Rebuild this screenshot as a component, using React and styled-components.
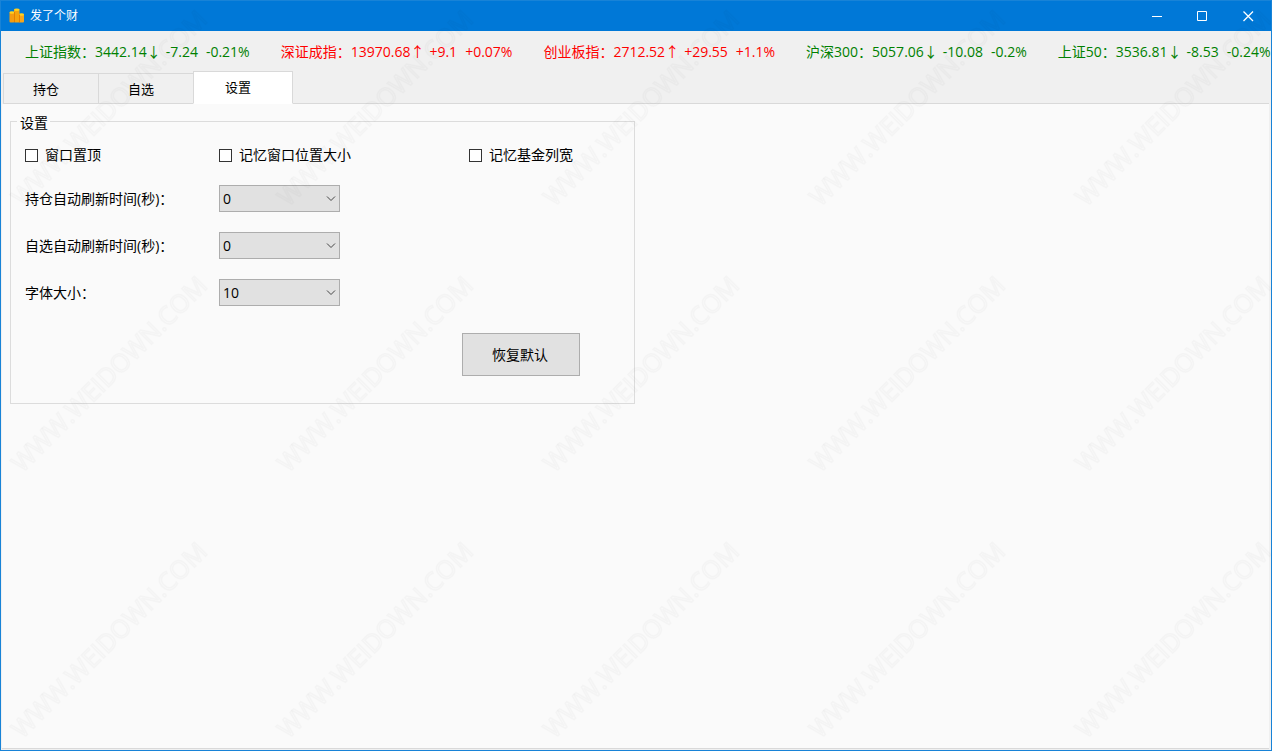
import React from "react";
import styled, { createGlobalStyle } from "styled-components";

const GlobalStyle = createGlobalStyle`
  * { box-sizing: border-box; }
  body {
    margin: 0;
    font-family: "Open Sans", "Noto Sans CJK SC", sans-serif;
    font-size: 14px;
    line-height: 20px;
    color: #000;
  }
  button, select, input { font: inherit; color: inherit; margin: 0; }
`;

const Window = styled.div`
  position: relative;
  display: flex;
  flex-direction: column;
  min-height: 100vh;
  overflow: hidden;
  border: 1px solid #1883d7;
  background: #f0f0f0;
`;

const TitleBar = styled.header`
  display: flex;
  align-items: center;
  height: 30px;
  padding-left: 8px;
  background: #0078d7;
  color: #fff;
`;

const Title = styled.h1`
  flex: 1;
  margin: 0 0 0 5px;
  font-size: 12px;
  font-weight: 400;
  line-height: 18px;
`;

const CaptionButton = styled.button`
  display: flex;
  align-items: center;
  justify-content: center;
  width: 46px;
  height: 30px;
  padding: 0;
  border: 0;
  background: transparent;
  color: #fff;
`;

const Ticker = styled.section`
  display: flex;
  gap: 31px;
  padding: 11px 0 9px 24px;
  white-space: nowrap;
`;

const Quote = styled.div`
  display: flex;
  flex: none;
  color: ${(p) => (p.$up ? "#f00" : "#008000")};
`;

const Change = styled.span`
  padding: 0 8px 0 5px;
`;

const TabBar = styled.div`
  display: flex;
  align-items: flex-end;
  height: 33px;
  margin: 0 2px;
  box-shadow: inset 0 -1px #d9d9d9;
`;

const Tab = styled.button`
  width: ${(p) => (p.$active ? 100 : 96)}px;
  height: ${(p) => (p.$active ? 33 : 31)}px;
  margin-right: -1px;
  padding: 0 10px ${(p) => (p.$active ? 2 : 0)}px 0;
  border: 1px solid #d9d9d9;
  border-bottom-color: ${(p) => (p.$active ? "#fff" : "#d9d9d9")};
  background: ${(p) => (p.$active ? "#fff" : "#f0f0f0")};
  font-size: 13px;
`;

const Pane = styled.main`
  flex: 1;
  margin: 0 2px 1px 1px;
  padding: 5px 8px;
  border-bottom: 1px solid #d9d9d9;
  background: #fafafa;
`;

const Group = styled.fieldset`
  width: 625px;
  max-width: 100%;
  min-width: 0;
  margin: 0;
  padding: 12px 14px 27px;
  border: 1px solid #dcdcdc;
`;

const Legend = styled.legend`
  margin-left: -8px;
  padding: 4px 2px 0 3px;
`;

const Options = styled.div`
  display: grid;
  grid-template-columns: 194px 250px 1fr;
  align-items: center;
  row-gap: 20px;
`;

const CheckLabel = styled.label`
  display: flex;
  align-items: center;
  gap: 7px;
`;

const Checkbox = styled.input`
  appearance: none;
  width: 13px;
  height: 13px;
  border: 1px solid #333;
  background: #fff;
`;

const FieldLabel = styled.label`
  grid-column: 1;
`;

const SelectBox = styled.div`
  display: grid;
  width: 121px;
  align-items: center;

  > * { grid-area: 1 / 1; }
  > svg { justify-self: end; margin-right: 4px; pointer-events: none; }
`;

const Select = styled.select`
  appearance: none;
  width: 100%;
  height: 27px;
  padding: 0 3px;
  border: 1px solid #adadad;
  border-radius: 0;
  background: #e1e1e1;
`;

const Actions = styled.div`
  display: flex;
  justify-content: flex-end;
  padding: 27px 40px 0 0;
`;

const PushButton = styled.button`
  width: 118px;
  height: 43px;
  padding: 0 2px 0 0;
  border: 1px solid #adadad;
  background: #e1e1e1;
`;

const WatermarkLayer = styled.svg`
  position: absolute;
  inset: -1px;
  width: calc(100% + 2px);
  height: calc(100% + 2px);
  pointer-events: none;
`;

const QUOTES = [
  { name: "上证指数", price: "3442.14", change: "-7.24", percent: "-0.21%" },
  { name: "深证成指", price: "13970.68", change: "+9.1", percent: "+0.07%", up: true },
  { name: "创业板指", price: "2712.52", change: "+29.55", percent: "+1.1%", up: true },
  { name: "沪深300", price: "5057.06", change: "-10.08", percent: "-0.2%" },
  { name: "上证50", price: "3536.81", change: "-8.53", percent: "-0.24%" },
];

const CHECKS = ["窗口置顶", "记忆窗口位置大小", "记忆基金列宽"];

const FIELDS = [
  { id: "hold", label: "持仓自动刷新时间(秒)：", value: "0" },
  { id: "watch", label: "自选自动刷新时间(秒)：", value: "0" },
  { id: "font", label: "字体大小：", value: "10" },
];

function CoinsIcon() {
  return (
    <svg width="16" height="16" viewBox="0 0 16 16" aria-hidden="true">
      <rect x="0.500" y="4" width="5" height="10.500" rx="1" fill="#f39c12" />
      <rect x="5" y="1" width="5.500" height="13.500" rx="1" fill="#f5a30f" />
      <rect x="10" y="6" width="5" height="8.500" rx="1" fill="#f7a61c" />
      <ellipse cx="3" cy="4.500" rx="2.500" ry="1.200" fill="#ffd21f" />
      <ellipse cx="7.800" cy="1.800" rx="2.700" ry="1.300" fill="#ffd21f" />
      <ellipse cx="12.500" cy="6.500" rx="2.500" ry="1.200" fill="#ffd21f" />
      <path d="M5.500 4v10M10.500 6.500v8" stroke="#e57f00" />
    </svg>
  );
}

function Watermark() {
  return (
    <WatermarkLayer aria-hidden="true">
      <defs>
        <pattern id="mark" width="266" height="266" y="-25" patternUnits="userSpaceOnUse">
          <text
            x="109"
            y="142"
            transform="rotate(-45 109 133)"
            textAnchor="middle"
            fontSize="25"
            fontWeight="500"
            fontFamily="Open Sans, sans-serif"
            fill="none"
            stroke="#000"
            strokeOpacity="0.025"
            strokeWidth="1.500"
          >
            WWW.WEIDOWN.COM
          </text>
        </pattern>
      </defs>
      <rect width="100%" height="100%" fill="url(#mark)" />
    </WatermarkLayer>
  );
}

export default function App() {
  return (
    <Window>
      <GlobalStyle />
      <TitleBar>
        <CoinsIcon />
        <Title>发了个财</Title>
        <CaptionButton aria-label="最小化">
          <svg width="11" height="11" stroke="currentColor"><path d="M1 5.500h10" /></svg>
        </CaptionButton>
        <CaptionButton aria-label="最大化">
          <svg width="11" height="11" fill="none" stroke="currentColor"><path d="M.5.5h9v9h-9z" /></svg>
        </CaptionButton>
        <CaptionButton aria-label="关闭">
          <svg width="11" height="11" stroke="currentColor" strokeWidth="1.300"><path d="M.5.5l9.500 9.500M10 .5l-9.500 9.500" /></svg>
        </CaptionButton>
      </TitleBar>
      <Ticker>
        {QUOTES.map((q) => (
          <Quote key={q.name} $up={q.up}>
            <span>{q.name}：{q.price}{q.up ? "↑" : "↓"}</span>
            <Change>{q.change}</Change>
            <span>{q.percent}</span>
          </Quote>
        ))}
      </Ticker>
      <TabBar role="tablist">
        <Tab role="tab">持仓</Tab>
        <Tab role="tab">自选</Tab>
        <Tab role="tab" aria-selected="true" $active>设置</Tab>
      </TabBar>
      <Pane>
        <Group>
          <Legend>设置</Legend>
          <Options>
            {CHECKS.map((text) => (
              <CheckLabel key={text}>
                <Checkbox type="checkbox" />
                {text}
              </CheckLabel>
            ))}
            {FIELDS.map((f) => (
              <React.Fragment key={f.id}>
                <FieldLabel htmlFor={f.id}>{f.label}</FieldLabel>
                <SelectBox>
                  <Select id={f.id} defaultValue={f.value}>
                    <option>{f.value}</option>
                  </Select>
                  <svg width="10" height="6" fill="none" stroke="#444"><path d="M1 .5L5 4.500 9 .5" /></svg>
                </SelectBox>
              </React.Fragment>
            ))}
          </Options>
          <Actions>
            <PushButton type="button">恢复默认</PushButton>
          </Actions>
        </Group>
      </Pane>
      <Watermark />
    </Window>
  );
}
